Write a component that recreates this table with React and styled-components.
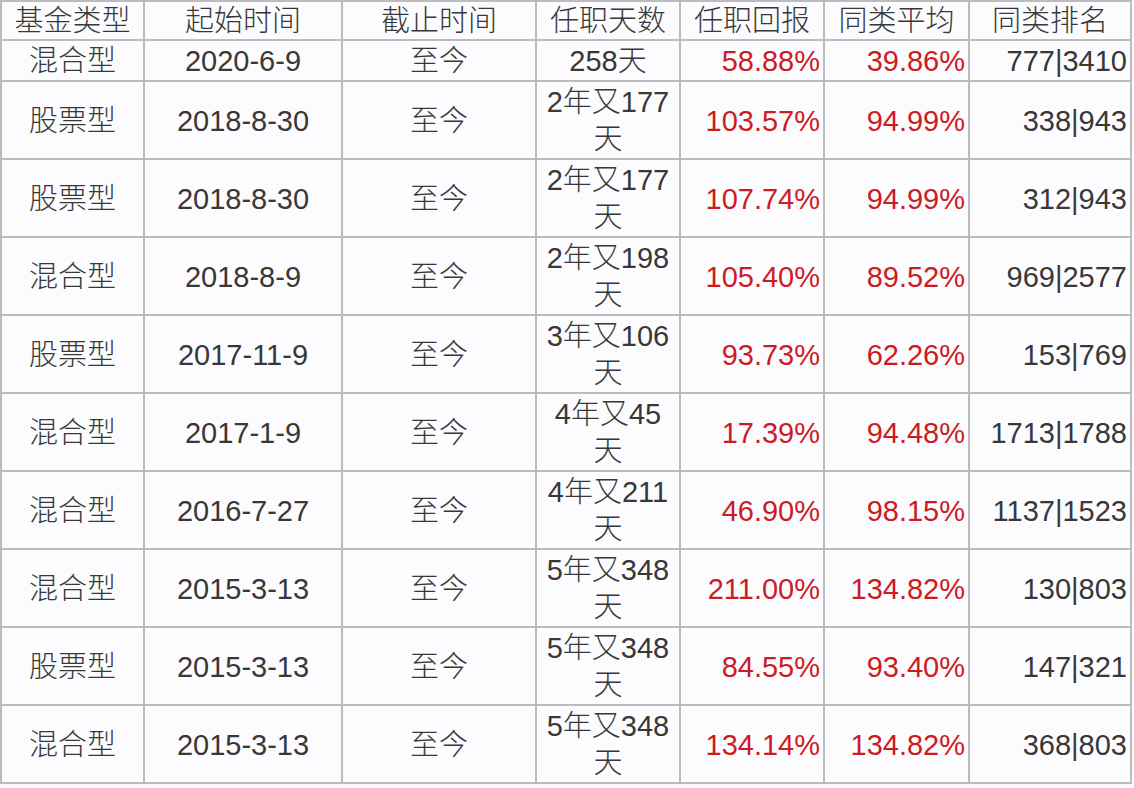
import React from "react"
import styled, { createGlobalStyle } from "styled-components"

const GlobalStyle = createGlobalStyle`
  html, body {
    margin: 0;
    padding: 0;
    background: #fbfbfd;
  }
`

const Table = styled.table`
  border-collapse: collapse;
  table-layout: fixed;
  width: 1131px;
  font-family: "Liberation Sans", "Noto Sans CJK SC", sans-serif;
  font-size: 29px;
  font-weight: 300;
  color: #383838;
  background: #fcfcfe;

  col:nth-child(1) { width: 143px; }
  col:nth-child(2) { width: 198px; }
  col:nth-child(3) { width: 194px; }
  col:nth-child(4) { width: 144px; }
  col:nth-child(5) { width: 144px; }
  col:nth-child(6) { width: 145px; }
  col:nth-child(7) { width: 162px; }
`

const Row = styled.tr`
  height: ${(p) => p.$h}px;
`

const Cell = styled.td`
  border: 2px solid #bcbcbe;
  padding: 2px ${(p) => (p.$align === "right" ? "3px" : "0")} 0;
  text-align: ${(p) => p.$align || "center"};
  color: ${(p) => (p.$red ? "#cc1b23" : "#383838")};
  line-height: 37px;
  white-space: nowrap;
  vertical-align: middle;
  font-weight: 300;
`

const HeadCell = styled(Cell).attrs({ as: "th" })`
  padding-top: 1px;
  line-height: 36px;
`

const headers = ["基金类型", "起始时间", "截止时间", "任职天数", "任职回报", "同类平均", "同类排名"]

const rows = [
  ["混合型", "2020-6-9", ["258天"], "58.88%", "39.86%", "777|3410"],
  ["股票型", "2018-8-30", ["2年又177", "天"], "103.57%", "94.99%", "338|943"],
  ["股票型", "2018-8-30", ["2年又177", "天"], "107.74%", "94.99%", "312|943"],
  ["混合型", "2018-8-9", ["2年又198", "天"], "105.40%", "89.52%", "969|2577"],
  ["股票型", "2017-11-9", ["3年又106", "天"], "93.73%", "62.26%", "153|769"],
  ["混合型", "2017-1-9", ["4年又45", "天"], "17.39%", "94.48%", "1713|1788"],
  ["混合型", "2016-7-27", ["4年又211", "天"], "46.90%", "98.15%", "1137|1523"],
  ["混合型", "2015-3-13", ["5年又348", "天"], "211.00%", "134.82%", "130|803"],
  ["股票型", "2015-3-13", ["5年又348", "天"], "84.55%", "93.40%", "147|321"],
  ["混合型", "2015-3-13", ["5年又348", "天"], "134.14%", "134.82%", "368|803"],
]

const App = () => {
  return (
    <>
      <GlobalStyle />
      <Table>
        <colgroup>
          {headers.map((h) => (
            <col key={h} />
          ))}
        </colgroup>
        <thead>
          <Row $h={39}>
            {headers.map((h) => (
              <HeadCell key={h}>{h}</HeadCell>
            ))}
          </Row>
        </thead>
        <tbody>
          {rows.map(([type, start, days, ret, avg, rank], i) => (
            <Row key={i} $h={days.length > 1 ? 78 : 40}>
              <Cell>{type}</Cell>
              <Cell>{start}</Cell>
              <Cell>至今</Cell>
              <Cell>
                {days.map((line, j) => (
                  <div key={j}>{line}</div>
                ))}
              </Cell>
              <Cell $align="right" $red>
                {ret}
              </Cell>
              <Cell $align="right" $red>
                {avg}
              </Cell>
              <Cell $align="right">{rank}</Cell>
            </Row>
          ))}
        </tbody>
      </Table>
    </>
  )
}

export default App
